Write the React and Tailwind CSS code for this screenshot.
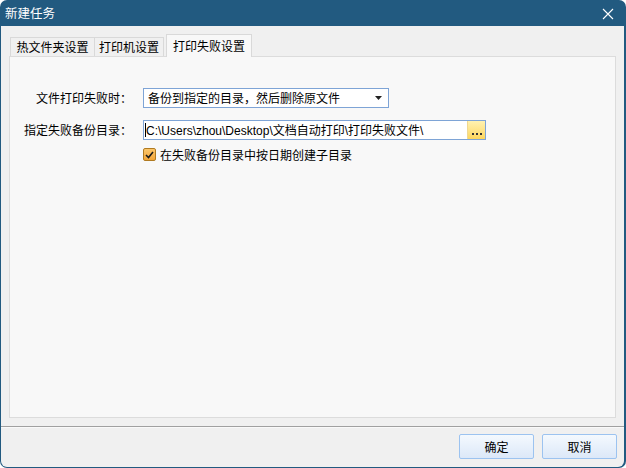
import React from "react";

const font = { fontFamily: '"Noto Sans CJK SC", "Liberation Sans", sans-serif' };

export default function App() {
  return (
    <div className="w-[626px] h-[468px] bg-white text-[12px] leading-none text-black" style={font}>
      <div className="h-full flex flex-col rounded-[7px] overflow-hidden bg-[#225a80] pl-px pr-[2px] pb-[1px]">
        {/* title bar */}
        <div className="h-[26px] flex items-center justify-between pl-[4px] pr-[10px] text-white text-[12.5px]">
          <span className="pt-[1px]">新建任务</span>
          <svg width="12" height="12" viewBox="0 0 12 12" className="mt-[1px]">
            <path d="M1 1 L11 11 M11 1 L1 11" stroke="white" strokeWidth="1.1" />
          </svg>
        </div>
        {/* body */}
        <div className="flex-1 flex flex-col bg-[#f0f0f0] rounded-b-[6px]">
          {/* tabs */}
          <div className="flex items-end h-[30px] pl-[9px]">
            <div className="w-[85px] h-[19px] flex items-center justify-center border border-b-0 border-[#d9d9d9] bg-[#f0f0f0]">
              热文件夹设置
            </div>
            <div className="w-[69px] h-[19px] flex items-center justify-center border border-b-0 border-l-0 border-[#d9d9d9] bg-[#f0f0f0]">
              打印机设置
            </div>
            <div className="ml-[2px] w-[86px] h-[23px] -mb-px relative z-10 flex items-center justify-center border border-b-0 border-[#d9d9d9] bg-[#f8f8f8] pb-[1px]">
              打印失败设置
            </div>
          </div>
          {/* panel */}
          <div className="mx-[8px] h-[362px] border border-[#dcdcdc] bg-[#f8f8f8] pt-[31px]">
            <div className="grid grid-cols-[122px_auto] gap-x-[11px] gap-y-[12px] items-center">
              <div className="text-right">文件打印失败时：</div>
              <div className="w-[246px] h-[20px] border border-[#7ea4d6] bg-white flex items-center justify-between pl-[4px] pr-[6px]">
                <span>备份到指定的目录，然后删除原文件</span>
                <svg width="7" height="4" viewBox="0 0 7 4"><path d="M0 0 H7 L3.5 4 Z" fill="#222" /></svg>
              </div>
              <div className="text-right">指定失败备份目录：</div>
              <div className="w-[343px] h-[20px] border border-[#7ea4d6] bg-white flex items-center">
                <div className="flex-1 flex items-center pl-[1px] h-full">
                  <span className="w-px h-[14px] bg-black"></span>
                  <span className="text-[12px]" style={{ fontFamily: '"Liberation Sans", "Noto Sans CJK SC", sans-serif' }}>
                    C:\Users\zhou\Desktop\<span style={font}>文档自动打印</span>\<span style={font}>打印失败文件</span>\
                  </span>
                </div>
                <div className="w-[18px] h-full border-l border-[#f0d890] bg-gradient-to-b from-[#fff2b0] to-[#fdd65a] flex items-end justify-center pb-[4px] gap-[2px]">
                  <span className="w-[2px] h-[2px] bg-[#333]"></span>
                  <span className="w-[2px] h-[2px] bg-[#333]"></span>
                  <span className="w-[2px] h-[2px] bg-[#333]"></span>
                </div>
              </div>
              <div></div>
              <div className="flex items-center gap-[4px] -mt-[4px]">
                <div className="w-[13px] h-[13px] border border-[#b07a20] rounded-[2px] bg-gradient-to-b from-[#fbc66a] to-[#f3a536] flex items-center justify-center">
                  <svg width="9" height="8" viewBox="0 0 9 8"><path d="M1 4 L3.5 6.5 L8 1" stroke="#1a1a1a" strokeWidth="1.6" fill="none" /></svg>
                </div>
                <span>在失败备份目录中按日期创建子目录</span>
              </div>
            </div>
          </div>
          {/* separator */}
          <div className="mt-[8px] h-px bg-[#a0a0a0]"></div>
          <div className="h-px bg-white/60"></div>
          {/* footer */}
          <div className="flex justify-end gap-[8px] pr-[7px] pt-[6px]">
            <button className="w-[75px] h-[25px] border border-[#9cc3f0] rounded-[2px] bg-gradient-to-b from-[#f4f9fe] to-[#dce8f8] flex items-center justify-center text-[12px]" style={font}>
              确定
            </button>
            <button className="w-[75px] h-[25px] border border-[#9cc3f0] rounded-[2px] bg-gradient-to-b from-[#f4f9fe] to-[#dce8f8] flex items-center justify-center text-[12px]" style={font}>
              取消
            </button>
          </div>
        </div>
      </div>
    </div>
  );
}
